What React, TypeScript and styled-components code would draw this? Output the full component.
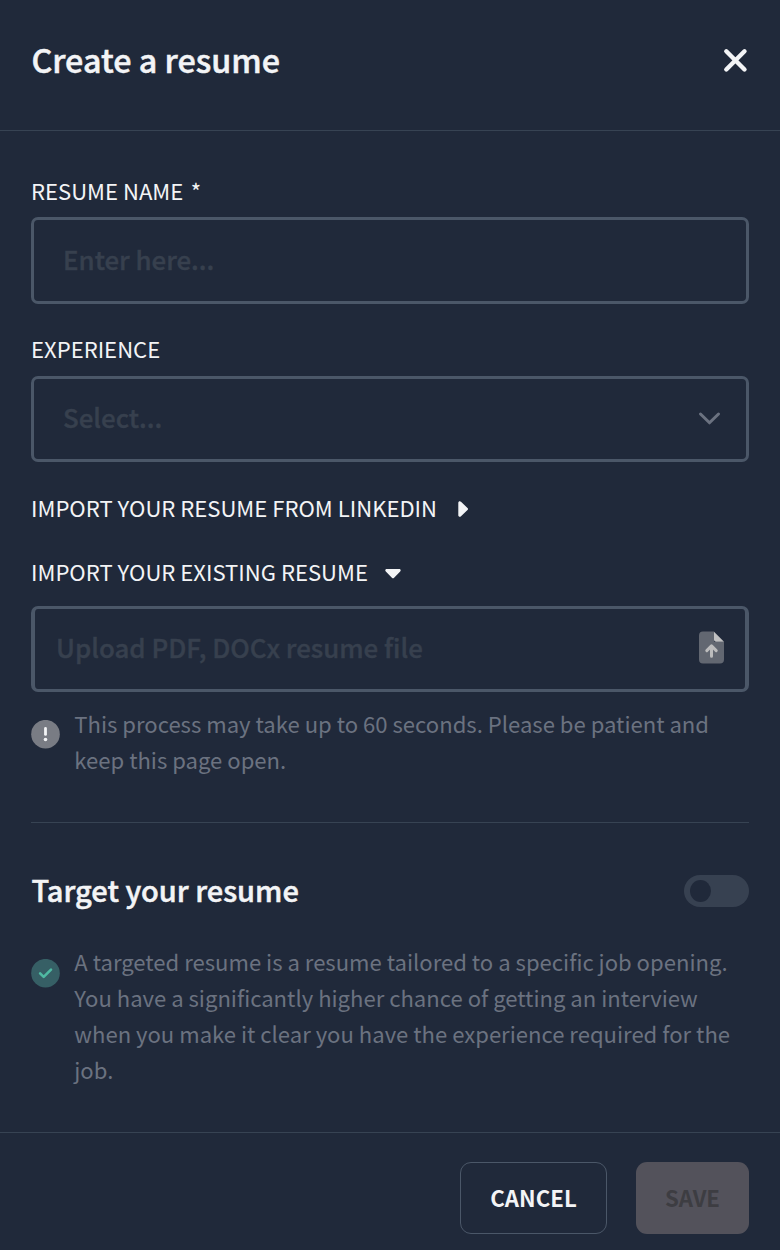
import React from "react";
import styled, { createGlobalStyle } from "styled-components";

const GlobalStyle = createGlobalStyle`
  * { box-sizing: border-box; }
  body {
    margin: 0;
    background: #20293a;
    color: #f3f4f6;
    font-family: "Noto Sans CJK SC", sans-serif;
  }
`;

const Modal = styled.main`
  display: flex;
  flex-direction: column;
  width: 780px;
  height: 1250px;
  overflow: hidden;
  background: #20293a;
`;

const Header = styled.header`
  display: flex;
  justify-content: space-between;
  height: 131px;
  padding: 35px 31px 0;
  border-bottom: 1px solid #374353;
`;

const Title = styled.h1<{ $size: number }>`
  margin: 0;
  padding-left: 0.4px;
  font-size: ${(p) => p.$size}px;
  font-weight: 500;
  line-height: 48px;
  white-space: nowrap;
  -webkit-text-stroke: 0.5px currentColor;
`;

const CloseButton = styled.button`
  display: flex;
  width: 26px;
  height: 26px;
  margin-top: 13px;
  padding: 0;
  border: 0;
  background: none;
`;

const Body = styled.section`
  display: flex;
  flex-direction: column;
  height: 1001px;
  padding: 43px 31px 0;
`;

const Label = styled.label<{ $top?: number; $bottom?: number }>`
  display: flex;
  align-items: center;
  height: 32px;
  margin-top: ${(p) => p.$top ?? 0}px;
  margin-bottom: ${(p) => p.$bottom ?? 0}px;
  font-size: 22.08px;
  line-height: 32px;
  white-space: nowrap;
`;

const Required = styled.span`
  margin-left: 7.5px;
`;

const Arrow = styled.svg<{ $gap: number }>`
  margin-top: 4px;
  margin-left: ${(p) => p.$gap}px;
`;

const Field = styled.div<{ $height: number; $side?: number; $left?: number; $right?: number }>`
  display: flex;
  align-items: center;
  justify-content: space-between;
  height: ${(p) => p.$height}px;
  flex-shrink: 0;
  padding: 0 ${(p) => p.$right ?? 23}px 2px ${(p) => p.$left ?? 29}px;
  border: 3px solid #4b5768;
  border-left-width: ${(p) => p.$side ?? 3}px;
  border-right-width: ${(p) => p.$side ?? 3}px;
  border-radius: 7px;
`;

const Placeholder = styled.span`
  margin-top: -2px;
  color: #37404e;
  font-size: 25.87px;
  font-weight: 500;
  line-height: 36px;
  white-space: nowrap;
  -webkit-text-stroke: 0.4px currentColor;
`;

const Note = styled.div<{ $top: number }>`
  display: flex;
  gap: 14px;
  margin-top: ${(p) => p.$top}px;
`;

const NoteIcon = styled.svg<{ $top: number }>`
  flex-shrink: 0;
  margin-top: ${(p) => p.$top}px;
`;

const NoteText = styled.p`
  margin: 0;
  padding-left: 0.3px;
  color: #6b7280;
  font-size: 22.08px;
  line-height: 36px;
  white-space: nowrap;
`;

const Divider = styled.hr`
  width: 100%;
  height: 1px;
  margin: 45px 0 0;
  border: 0;
  background: #374353;
`;

const TargetRow = styled.div`
  display: flex;
  justify-content: space-between;
  height: 48px;
  margin-top: 42px;
`;

const Toggle = styled.button`
  display: flex;
  align-items: center;
  width: 65px;
  height: 32px;
  margin-top: 10px;
  padding: 0 6px;
  border: 0;
  border-radius: 16px;
  background: #374151;
`;

const Knob = styled.span`
  width: 21px;
  height: 22px;
  border-radius: 50%;
  background: #20293a;
`;

const Footer = styled.footer`
  display: flex;
  justify-content: flex-end;
  gap: 29px;
  height: 118px;
  padding: 29px 31px 0;
  border-top: 1px solid #374353;
`;

const Button = styled.button<{ $disabled?: boolean }>`
  width: ${(p) => (p.$disabled ? 113 : 147)}px;
  height: 72px;
  padding: 0 0 2px;
  border: ${(p) => (p.$disabled ? "0" : "1px solid #4b5768")};
  border-radius: 11px;
  background: ${(p) => (p.$disabled ? "#53525b" : "transparent")};
  color: ${(p) => (p.$disabled ? "#3d3d42" : "#f3f4f6")};
  font-family: inherit;
  font-size: 22.2px;
  font-weight: 700;
  line-height: 36px;
`;

export default function App() {
  return (
    <>
      <GlobalStyle />
      <Modal>
        <Header>
          <Title $size={32.3}>Create a resume</Title>
          <CloseButton aria-label="Close">
            <svg width="26" height="26" viewBox="0 0 26 26" fill="none" stroke="#f3f4f6" strokeWidth="4.4" strokeLinecap="round">
              <path d="M3.3 3.3 21.5 21.5M21.5 3.3 3.3 21.5" />
            </svg>
          </CloseButton>
        </Header>
        <Body>
          <Label $bottom={11}>RESUME NAME<Required>*</Required></Label>
          <Field $height={87}>
            <Placeholder>Enter here...</Placeholder>
          </Field>
          <Label $top={28} $bottom={12}>EXPERIENCE</Label>
          <Field $height={86}>
            <Placeholder>Select...</Placeholder>
            <svg width="28" height="20" viewBox="0 0 28 20" fill="none" stroke="#6b7280" strokeWidth="3" strokeLinecap="round" strokeLinejoin="round">
              <path d="m5.5 6 9 8.8 9-8.8" />
            </svg>
          </Field>
          <Label $top={29}>
            IMPORT YOUR RESUME FROM LINKEDIN
            <Arrow $gap={21} width="11" height="16" viewBox="0 0 11 16" fill="#f3f4f6">
              <path d="M.3 1.8C.3.2 2-.2 3 .8l6.5 6.1q1.1 1.1 0 2.2L3 15.2c-1 1-2.7.5-2.7-1Z" />
            </Arrow>
          </Label>
          <Label $top={32} $bottom={19}>
            IMPORT YOUR EXISTING RESUME
            <Arrow $gap={17} width="16" height="12" viewBox="0 -2 16 12" fill="#f3f4f6">
              <path d="M1.8 0C.2 0-.2 1.5.8 2.5l6.1 6.2q1.1 1.1 2.2 0l6.1-6.2c1-1 .5-2.5-1-2.5Z" />
            </Arrow>
          </Label>
          <Field $height={86} $side={4} $left={21} $right={21}>
            <Placeholder>Upload PDF, DOCx resume file</Placeholder>
            <svg width="25" height="34" viewBox="0 0 25 34">
              <path d="M4 .5h11v10.5h10v17.5a4 4 0 0 1-4 4H4a4 4 0 0 1-4-4V4.5a4 4 0 0 1 4-4Z" fill="#626771" />
              <path d="M15 .8v8a2 2 0 0 0 2 2h8Z" fill="#c1c1c2" />
              <path d="M12.5 25.2v-9.5M7.8 19.6l4.7-4.7 4.7 4.7" fill="none" stroke="#bcbcbd" strokeWidth="3" strokeLinecap="round" strokeLinejoin="round" />
            </svg>
          </Field>
          <Note $top={13}>
            <NoteIcon $top={15} width="29" height="29" viewBox="0 0 29 29">
              <circle cx="14.5" cy="14.2" r="14.3" fill="#797c84" />
              <path d="M14.5 8.5v5.9" stroke="#f3f4f6" strokeWidth="2.8" strokeLinecap="round" />
              <circle cx="14.5" cy="19.5" r="1.8" fill="#f3f4f6" />
            </NoteIcon>
            <NoteText>
              This process may take up to 60 seconds. Please be patient and<br />
              keep this page open.
            </NoteText>
          </Note>
          <Divider />
          <TargetRow>
            <Title as="h2" $size={29}>Target your resume</Title>
            <Toggle role="switch" aria-checked="false" aria-label="Target your resume"><Knob /></Toggle>
          </TargetRow>
          <Note $top={30}>
            <NoteIcon $top={16} width="29" height="29" viewBox="0 0 29 29">
              <circle cx="14.5" cy="14.2" r="14.3" fill="#365f65" />
              <path d="m9.1 14.3 3.6 3.6 7.3-7.3" fill="none" stroke="#4fb9a2" strokeWidth="2.6" strokeLinecap="round" strokeLinejoin="round" />
            </NoteIcon>
            <NoteText>
              A targeted resume is a resume tailored to a specific job opening.<br />
              You have a significantly higher chance of getting an interview<br />
              when you make it clear you have the experience required for the<br />
              job.
            </NoteText>
          </Note>
        </Body>
        <Footer>
          <Button>CANCEL</Button>
          <Button $disabled disabled>SAVE</Button>
        </Footer>
      </Modal>
    </>
  );
}
